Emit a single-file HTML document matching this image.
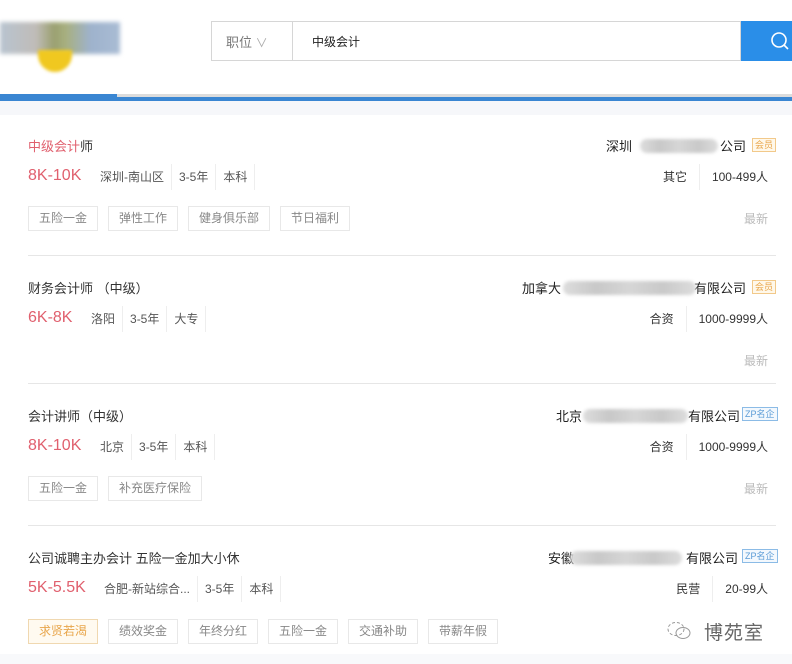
<!DOCTYPE html><html><head><meta charset="utf-8"><style>
*{margin:0;padding:0;box-sizing:border-box}
body{width:792px;height:664px;overflow:hidden;background:#fff;font-family:"Liberation Sans","Noto Sans CJK SC",sans-serif;position:relative;color:#333}
.a{position:absolute;white-space:nowrap}
.t{font-size:13px;color:#333}
.s{font-size:16px;color:#e0606e}
.m{font-size:12px;color:#555;height:26px;line-height:26px;padding:0 7px;border-left:1px solid #eee}
.tag{position:absolute;height:25px;line-height:23px;border:1px solid #e8e8e8;font-size:12px;color:#888;padding:0 10px;background:#fff}
.new{font-size:12px;color:#bbb}
.sep{position:absolute;left:28px;width:748px;height:1px;background:#e6e6e6}
.blur{position:absolute;height:14px;border-radius:7px;background:linear-gradient(90deg,#ddd,#c8c8c8,#d6d6d6,#c9c9c9,#ddd);filter:blur(1.5px)}
.co{position:absolute;font-size:13px;color:#222;text-align:right;white-space:nowrap}
.badge{position:absolute;font-size:9px;height:14px;line-height:12px;padding:0 2px;border:1px solid}
.g{color:#e8a54a;border-color:#f2c98a;background:#fff8ea}
.z{color:#5a9bd6;border-color:#8bbbe6;background:#f3f8fd}
.rm{position:absolute;right:24px;display:flex}
.rm .m{color:#333;font-size:12px}
.rm .m:first-child{border:0;padding-right:12px}
.rm .m:last-child{padding-left:12px;padding-right:0}
</style></head><body>
<div class="a" style="left:0;top:22px;width:120px;height:32px;background:linear-gradient(90deg,#b8c4d0,#c0bcb8 30%,#9aa070 45%,#a8b080 55%,#9eb2cc 75%,#a9bcd4);filter:blur(2px)"></div>
<div class="a" style="left:38px;top:50px;width:34px;height:22px;border-radius:0 0 17px 17px;background:#f0c820;filter:blur(1.5px)"></div>
<div class="a" style="left:211px;top:21px;width:530px;height:40px;border:1px solid #d6d6d6"></div>
<div class="a" style="left:292px;top:21px;width:1px;height:40px;background:#d6d6d6"></div>
<div class="a" style="left:226px;top:32px;font-size:13px;color:#777">职位 <span style="color:#aaa;font-size:12px">∨</span></div>
<div class="a" style="left:312px;top:33px;font-size:12px;color:#222">中级会计</div>
<div class="a" style="left:741px;top:21px;width:51px;height:40px;background:#2a8ee8"></div>
<svg class="a" style="left:768px;top:30px" width="24" height="22"><circle cx="11" cy="10" r="7" fill="none" stroke="#fff" stroke-width="1.6"/><line x1="16" y1="15" x2="20" y2="19" stroke="#fff" stroke-width="1.6"/></svg>
<div class="a" style="left:0;top:94px;width:792px;height:4px;background:#dcdcdc"></div>
<div class="a" style="left:0;top:97px;width:792px;height:4px;background:#3a86d2"></div>
<div class="a" style="left:0;top:94px;width:117px;height:7px;background:#3a86d2"></div>
<div class="a" style="left:0;top:101px;width:792px;height:14px;background:#f6f7fa"></div>

<div class="a t" style="left:28px;top:136px"><span style="color:#e0606e">中级会计</span>师</div>
<div class="a s" style="left:28px;top:167px">8K-10K</div>
<div class="a" style="left:93px;top:164px;display:flex"><span class="m" style="border:0">深圳-南山区</span><span class="m">3-5年</span><span class="m" style="border-right:1px solid #eee">本科</span></div>
<div class="tag" style="left:28px;top:206px">五险一金</div><div class="tag" style="left:108px;top:206px">弹性工作</div><div class="tag" style="left:188px;top:206px">健身俱乐部</div><div class="tag" style="left:280px;top:206px">节日福利</div>
<div class="co" style="right:46px;top:136px">深圳<span style="display:inline-block;width:88px"></span>公司</div>
<div class="blur" style="left:640px;top:139px;width:78px"></div>
<div class="badge g" style="left:752px;top:138px">会员</div>
<div class="rm" style="top:164px"><span class="m">其它</span><span class="m">100-499人</span></div>
<div class="a new" style="left:744px;top:210px">最新</div>
<div class="sep" style="top:255px"></div>

<div class="a t" style="left:28px;top:278px">财务会计师 （中级）</div>
<div class="a s" style="left:28px;top:309px">6K-8K</div>
<div class="a" style="left:84px;top:306px;display:flex"><span class="m" style="border:0">洛阳</span><span class="m">3-5年</span><span class="m" style="border-right:1px solid #eee">大专</span></div>
<div class="co" style="right:46px;top:278px">加拿大<span style="display:inline-block;width:133px"></span>有限公司</div>
<div class="blur" style="left:563px;top:281px;width:133px"></div>
<div class="badge g" style="left:752px;top:280px">会员</div>
<div class="rm" style="top:306px"><span class="m">合资</span><span class="m">1000-9999人</span></div>
<div class="a new" style="left:744px;top:352px">最新</div>
<div class="sep" style="top:383px"></div>

<div class="a t" style="left:28px;top:406px">会计讲师（中级）</div>
<div class="a s" style="left:28px;top:437px">8K-10K</div>
<div class="a" style="left:93px;top:434px;display:flex"><span class="m" style="border:0">北京</span><span class="m">3-5年</span><span class="m" style="border-right:1px solid #eee">本科</span></div>
<div class="tag" style="left:28px;top:476px">五险一金</div><div class="tag" style="left:108px;top:476px">补充医疗保险</div>
<div class="co" style="right:52px;top:406px">北京<span style="display:inline-block;width:106px"></span>有限公司</div>
<div class="blur" style="left:583px;top:409px;width:105px"></div>
<div class="badge z" style="left:742px;top:407px">ZP名企</div>
<div class="rm" style="top:434px"><span class="m">合资</span><span class="m">1000-9999人</span></div>
<div class="a new" style="left:744px;top:480px">最新</div>
<div class="sep" style="top:525px"></div>

<div class="a t" style="left:28px;top:548px">公司诚聘主办会计 五险一金加大小休</div>
<div class="a s" style="left:28px;top:579px">5K-5.5K</div>
<div class="a" style="left:97px;top:576px;display:flex"><span class="m" style="border:0">合肥-新站综合...</span><span class="m">3-5年</span><span class="m" style="border-right:1px solid #eee">本科</span></div>
<div class="tag" style="left:28px;top:619px;color:#e8a54a;border-color:#f0d8b0;background:#fffaf0">求贤若渴</div><div class="tag" style="left:108px;top:619px">绩效奖金</div><div class="tag" style="left:188px;top:619px">年终分红</div><div class="tag" style="left:268px;top:619px">五险一金</div><div class="tag" style="left:348px;top:619px">交通补助</div><div class="tag" style="left:428px;top:619px">带薪年假</div>
<div class="co" style="right:54px;top:548px">安徽<span style="display:inline-block;width:112px"></span>有限公司</div>
<div class="blur" style="left:570px;top:551px;width:112px"></div>
<div class="badge z" style="left:742px;top:549px">ZP名企</div>
<div class="rm" style="top:576px"><span class="m">民营</span><span class="m">20-99人</span></div>
<svg class="a" style="left:666px;top:620px" width="26" height="22"><ellipse cx="10" cy="9" rx="8" ry="6.5" fill="none" stroke="#999" stroke-width="1" stroke-dasharray="3 2"/><ellipse cx="17" cy="13" rx="7" ry="5.5" fill="none" stroke="#999" stroke-width="1"/></svg>
<div class="a" style="left:704px;top:618px;font-size:19px;color:#666;letter-spacing:1px">博苑室</div>
<div class="a" style="left:0;top:654px;width:792px;height:10px;background:#f8f9fb"></div>
</body></html>
